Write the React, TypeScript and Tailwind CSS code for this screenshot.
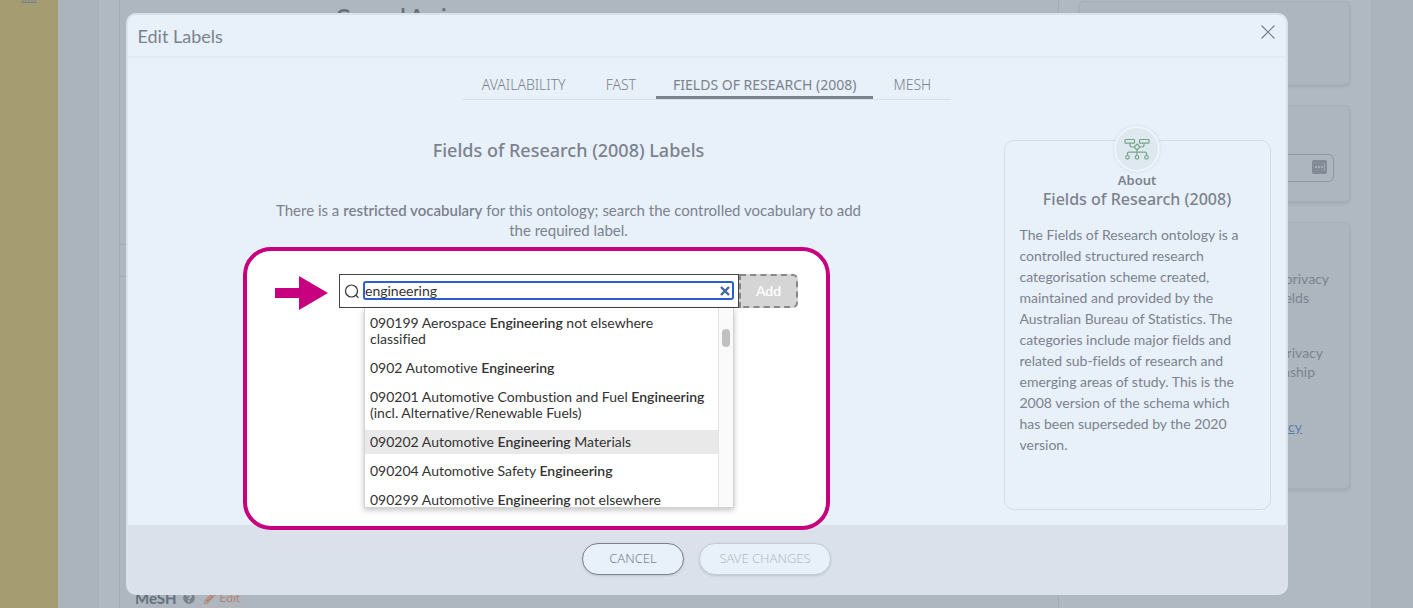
import { useState } from "react";
import type { ReactNode } from "react";
import { FaPencilAlt, FaQuestionCircle } from "react-icons/fa";

const tabs = ["AVAILABILITY", "FAST", "FIELDS OF RESEARCH (2008)", "MESH"];

type Option = { before: string; after: string };

const options: Option[] = [
  { before: "090199 Aerospace ", after: " not elsewhere classified" },
  { before: "0902 Automotive ", after: "" },
  { before: "090201 Automotive Combustion and Fuel ", after: " (incl. Alternative/Renewable Fuels)" },
  { before: "090202 Automotive ", after: " Materials" },
  { before: "090204 Automotive Safety ", after: "" },
  { before: "090299 Automotive ", after: " not elsewhere" },
];

function Card({ className, children }: { className: string; children?: ReactNode }) {
  return (
    <section className={`rounded-[5px] border border-[#a5adb7] bg-[#adb5bf] shadow-[0_2px_3px_rgba(80,90,105,0.15)] ${className}`}>
      {children}
    </section>
  );
}

function Backdrop() {
  return (
    <div className="flex h-full">
      <nav className="w-[58px] shrink-0 bg-[#a59c72]">
        <svg viewBox="0 0 16 4" className="ml-[21px] h-1 w-4 stroke-[#7b8094]" fill="none" aria-hidden="true">
          <path d="M0 2.5h16M2 0v2.5M5 0v2.5M8 0v2.5M11 0v2.5M14 0v2.5" />
        </svg>
      </nav>
      <div className="flex flex-1 bg-[#abb3bd] pl-10 pr-[41px]">
        <div className="flex flex-1 border-x border-[#a8b0ba] bg-[#b0b8c2] pl-5">
          <main className="flex flex-1 flex-col border-x border-[#a3abb6] bg-[#aeb6c0]">
            <h1 className="ml-[216px] mt-1 text-xl leading-6 font-bold text-[#66707c]">General Assi</h1>
            <div className="mt-[216px] h-[33px] border-y border-[#a3abb6]" />
            <div className="mt-auto flex h-5 items-center gap-1 pl-[15px]">
              <h2 className="text-[15px] leading-5 font-bold text-[#66707c]">MeSH</h2>
              <FaQuestionCircle className="ml-0.5 size-3 text-[#78818c]" />
              <span className="flex h-5 items-center gap-1 rounded border border-[#bab4b4] px-1 text-xs text-[#b58572]">
                <FaPencilAlt className="size-3" /> Edit
              </span>
            </div>
          </main>
          <aside className="flex w-[312px] flex-col gap-5 pt-px pr-[21px] pl-5">
            <Card className="h-[84px]" />
            <Card className="h-[97px] px-[15px] pt-12">
              <div className="flex h-7 items-center justify-end rounded-[5px] border border-[#8d96a2] pr-1.5">
                <span className="mb-0.5 flex h-3.5 w-[15px] items-center justify-center gap-px rounded-xs bg-[#838b96]">
                  <span className="size-0.5 rounded-full bg-[#b0b8c2]" />
                  <span className="size-0.5 rounded-full bg-[#b0b8c2]" />
                  <span className="size-0.5 rounded-full bg-[#b0b8c2]" />
                  <span className="h-2 w-px bg-[#a0a8b2]" />
                </span>
              </div>
            </Card>
            <Card className="h-[267px] pt-[46px] text-right text-sm leading-[19px] text-[#7b848f]">
              <p className="pr-5">privacy</p>
              <p className="pr-10">fields</p>
              <p className="mt-9 pr-[26px]">privacy</p>
              <p className="pr-[34px]">relationship</p>
              <p className="mt-9 pr-[47px]">
                <a href="#privacy" className="text-[#5f7fa5] underline">privacy</a>
              </p>
            </Card>
          </aside>
        </div>
      </div>
    </div>
  );
}

function OntologyIcon() {
  return (
    <svg viewBox="0 0 26 22" className="h-[22px] w-[26px] stroke-[#78a38b]" fill="none" strokeWidth="1.2" aria-hidden="true">
      <rect x="1" y="1.5" width="9.5" height="3.6" rx=".6" />
      <rect x="15.5" y="1.5" width="9.5" height="3.6" rx=".6" />
      <path d="M6 5.1v2.2q0 1.7 1.7 1.7h2.3M20 5.1v2.2q0 1.7-1.7 1.7H16M13 6l3 3-3 3-3-3zM13 12v5.6M3.5 17.6v-2q0-1.4 1.4-1.4h16.2q1.4 0 1.4 1.4v2" />
      <circle cx="3.5" cy="19.3" r="1.8" />
      <circle cx="13" cy="19.3" r="1.8" />
      <circle cx="22.5" cy="19.3" r="1.8" />
    </svg>
  );
}

function SearchGroup() {
  const [query, setQuery] = useState("engineering");
  return (
    <div className="relative mb-0.5 w-[459px]">
      <div className="absolute -top-[27px] -right-8 -bottom-[22px] -left-24 rounded-[28px] border-4 border-[#c6007e] bg-white">
        <svg viewBox="0 0 53 34" className="mt-[25px] ml-7 h-[34px] w-[53px] fill-[#c6007e]" aria-hidden="true">
          <path d="M0 12h24V0l29 17-29 17V22H0z" />
        </svg>
      </div>
      <div className="relative flex">
        <div className="flex h-[34px] flex-1 gap-1 border border-[#444] bg-white px-1 pt-1.5">
          <svg viewBox="0 0 16 16" className="mt-0.5 size-4 shrink-0 stroke-[#333]" fill="none" strokeWidth="1.2" aria-hidden="true">
            <circle cx="7.5" cy="8" r="6" />
            <path d="M12 12.4l2.5 2.3" />
          </svg>
          <label htmlFor="label-search" className="sr-only">Search labels</label>
          <div className="-ml-px flex h-[19px] flex-1 items-center rounded-[3px] border-2 border-[#2c5fcb] bg-white">
            <input
              id="label-search"
              value={query}
              onChange={(e) => setQuery(e.target.value)}
              className="h-[19px] min-w-0 flex-1 text-sm text-[#333] outline-none"
            />
            <button type="button" aria-label="Clear search" onClick={() => setQuery("")} className="mr-0.5">
              <svg viewBox="0 0 10 10" className="size-2.5 stroke-[#41659f]" strokeWidth="2.4" aria-hidden="true">
                <path d="M1 1l8 8M9 1l-8 8" />
              </svg>
            </button>
          </div>
        </div>
        <button type="button" disabled className="h-[34px] w-[59px] rounded-r-[5px] border-2 border-dashed border-[#888] bg-[#d5d5d5] text-sm font-semibold text-white">
          Add
        </button>
      </div>
      <div className="relative mr-16 ml-[25px] flex h-[200px] overflow-hidden border border-t-0 border-[#d4d4d4] bg-white shadow-[0_2px_6px_rgba(0,0,0,0.25)]">
        <ul role="listbox" aria-label="Matching labels" className="flex flex-1 flex-col gap-[5px] pt-[3px] text-sm leading-4 text-[#333]">
          {options.map((o) => (
            <li
              key={o.before}
              role="option"
              aria-selected={o.before.startsWith("090202")}
              className="py-1 pr-1.5 pl-[5px] aria-selected:bg-[#e9e9e9]"
            >
              {o.before}
              <b className="font-semibold">Engineering</b>
              {o.after}
            </li>
          ))}
        </ul>
        <div className="flex w-[15px] justify-center border-l border-[#e4e4e4] bg-[#fafafa] pt-[21px]">
          <div className="h-[18px] w-2 rounded-full bg-[#c1c1c1]" />
        </div>
      </div>
    </div>
  );
}

export default function App() {
  const [active, setActive] = useState(tabs[2]);
  return (
    <div className="relative h-screen overflow-hidden font-['Lato',sans-serif] [font-variant-ligatures:no-common-ligatures]">
      <Backdrop />
      <div className="absolute inset-0 flex items-start justify-center px-12 pt-[13px]">
        <div role="dialog" aria-labelledby="dialog-title" className="w-full max-w-[1162px] overflow-hidden rounded-[10px] border-2 border-[#dae1ea] bg-[#e8f0fa] text-[#7b828d]">
          <header className="flex h-[42px] items-center justify-between border-b border-[#e0e7f1] pr-[11px] pl-2.5 shadow-[0_1px_2px_rgba(120,140,170,0.06)]">
            <h2 id="dialog-title" className="text-lg leading-5">Edit Labels</h2>
            <button type="button" aria-label="Close" className="mb-2">
              <svg viewBox="0 0 14 14" className="size-3.5 stroke-[#767d88]" strokeWidth="1.1" aria-hidden="true">
                <path d="M.5.5l13 13M13.5.5l-13 13" />
              </svg>
            </button>
          </header>
          <div role="tablist" className="mt-3 flex justify-center">
            <div className="flex border-b border-[#d9e0ea]">
              {tabs.map((t) => (
                <button
                  key={t}
                  type="button"
                  role="tab"
                  aria-selected={t === active}
                  onClick={() => setActive(t)}
                  className="h-[30px] border-b-3 border-transparent px-5 pt-1 font-['Noto_Sans',sans-serif] text-sm font-light aria-selected:border-[#7b828d] aria-selected:px-[17px] aria-selected:font-normal"
                >
                  {t}
                </button>
              ))}
            </div>
          </div>
          <div className="flex justify-between pr-[15px] pb-[15px]">
            <div className="flex flex-1 flex-col items-center pl-1.5">
              <h3 className="mt-9 font-['Noto_Sans',sans-serif] text-lg leading-7 font-medium">Fields of Research (2008) Labels</h3>
              <p className="mt-9 mb-[34px] text-center text-[15px] leading-5">
                There is a <b className="font-semibold">restricted vocabulary</b> for this ontology; search the controlled vocabulary to add
                <br />
                the required label.
              </p>
              <SearchGroup />
            </div>
            <aside className="mt-10 flex w-[267px] flex-col items-center rounded-[10px] border border-[#d5dce7] px-[15px]">
              <div className="-mt-[15px] flex size-[46px] shrink-0 items-center justify-center rounded-full border-2 border-[#edf4fb] bg-[#dde9ee] shadow-[0_0_3px_rgba(140,160,190,0.3)]">
                <OntologyIcon />
              </div>
              <p className="font-['Noto_Sans',sans-serif] text-[13px] leading-4 font-semibold">About</p>
              <h4 className="font-['Noto_Sans',sans-serif] text-base leading-[22px] font-medium">Fields of Research (2008)</h4>
              <p className="mt-3.5 w-full pr-3 text-sm leading-[21px]">
                The Fields of Research ontology is a controlled structured research categorisation scheme created,
                maintained and provided by the Australian Bureau of Statistics. The categories include major fields and
                related sub-fields of research and emerging areas of study. This is the 2008 version of the schema which
                has been superseded by the 2020 version.
              </p>
            </aside>
          </div>
          <footer className="flex h-[68px] items-center justify-center gap-[15px] bg-[#dae1ea] font-['Noto_Sans',sans-serif] text-[13px] font-light">
            <button type="button" className="h-8 w-[102px] rounded-full border border-[#7b828d] bg-[#e8f0fa] shadow-sm">CANCEL</button>
            <button type="button" disabled className="h-8 w-[132px] rounded-full border border-[#c5ccd7] bg-[#e8f0fa] text-[#b5bcc7] shadow-sm">SAVE CHANGES</button>
          </footer>
        </div>
      </div>
    </div>
  );
}
